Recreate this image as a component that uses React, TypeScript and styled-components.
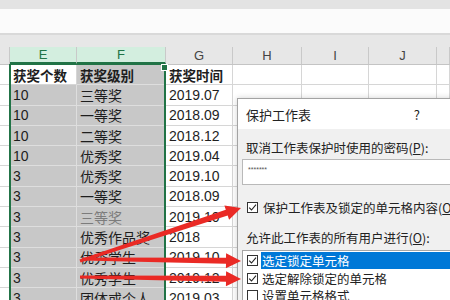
import React from "react"
import styled, { createGlobalStyle } from "styled-components"

const COLS = "10px 67px 89px 67px 69px 67px 68px 1fr"

const GlobalStyle = createGlobalStyle`
  html, body {
    margin: 0;
    padding: 0;
    width: 450px;
    height: 300px;
    overflow: hidden;
    background: #fff;
  }
  body {
    font-family: "Noto Sans CJK SC", "Liberation Sans", sans-serif;
  }
`

type Row = { count: string; level: string; time: string; muted?: boolean }

const rows: Row[] = [
  { count: "10", level: "三等奖", time: "2019.07" },
  { count: "10", level: "一等奖", time: "2018.09" },
  { count: "10", level: "二等奖", time: "2018.12" },
  { count: "10", level: "优秀奖", time: "2019.04" },
  { count: "3", level: "优秀奖", time: "2019.10" },
  { count: "3", level: "一等奖", time: "2018.09" },
  { count: "3", level: "三等奖", time: "2019.10", muted: true },
  { count: "3", level: "优秀作品奖", time: "2018" },
  { count: "3", level: "优秀学生", time: "2019.10" },
  { count: "3", level: "优秀学生", time: "2019.12" },
  { count: "3", level: "团体或个人", time: "2019.03" },
]

const headers = ["", "E", "F", "G", "H", "I", "J", ""]

// red annotation arrows drawn over the screenshot
const arrows = [
  { x1: 80, y1: 261, x2: 241, y2: 208 },
  { x1: 82, y1: 259, x2: 241, y2: 261 },
  { x1: 80, y1: 277, x2: 241, y2: 279 },
]

const arrowPoints = (x1: number, y1: number, x2: number, y2: number) => {
  const dx = x2 - x1
  const dy = y2 - y1
  const len = Math.hypot(dx, dy)
  const ux = dx / len
  const uy = dy / len
  const nx = -uy
  const ny = ux
  const head = 15
  const hw = 7.5
  const w0 = 1.6
  const w1 = 3
  const bx = x2 - ux * head
  const by = y2 - uy * head
  const pts = [
    [x1 + nx * w0, y1 + ny * w0],
    [bx + nx * w1, by + ny * w1],
    [bx + nx * hw, by + ny * hw],
    [x2, y2],
    [bx - nx * hw, by - ny * hw],
    [bx - nx * w1, by - ny * w1],
    [x1 - nx * w0, y1 - ny * w0],
  ]
  return pts.map(p => p.map(v => v.toFixed(1)).join(",")).join(" ")
}

const Check = ({ checked }: { checked: boolean }) => (
  <CheckBox>
    {checked && (
      <svg width="9" height="9" viewBox="0 0 9 9">
        <polyline points="1.2,4.6 3.5,7 8,1.6" fill="none" stroke="#222" strokeWidth="1.1" />
      </svg>
    )}
  </CheckBox>
)

const App = () => {
  return (
    <Page>
      <GlobalStyle />
      <TopBand />
      <FormulaBar />
      <RibbonGap />
      <HeaderRow>
        {headers.map((h, i) => (
          <ColHead key={i} $selected={h === "E" || h === "F"}>{h}</ColHead>
        ))}
      </HeaderRow>

      <DataRow>
        <Cell />
        <Cell $bold>获奖个数</Cell>
        <Cell $sel $bold>获奖级别</Cell>
        <Cell $bold>获奖时间</Cell>
        <Cell />
        <Cell />
        <Cell />
        <Cell />
      </DataRow>
      {rows.map((r, i) => (
        <DataRow key={i}>
          <Cell />
          <Cell $sel>{r.count}</Cell>
          <Cell $sel $muted={r.muted}>{r.level}</Cell>
          <Cell>{r.time}</Cell>
          <Cell />
          <Cell />
          <Cell />
          <Cell />
        </DataRow>
      ))}

      <SelectionFrame>
        <FillHandle />
      </SelectionFrame>

      <Dialog>
        <TitleBar>
          <span>保护工作表</span>
          <span>?</span>
        </TitleBar>
        <DialogBody>
          <FieldLabel $gap={10}>取消工作表保护时使用的密码(<u>P</u>):</FieldLabel>
          <PasswordBox>*******</PasswordBox>
          <ProtectRow>
            <Check checked />
            <span>保护工作表及锁定的单元格内容(<u>O</u>)</span>
          </ProtectRow>
          <FieldLabel $gap={13}>允许此工作表的所有用户进行(<u>O</u>):</FieldLabel>
          <PermList>
            <PermItem>
              <Check checked />
              <PermText $active>选定锁定单元格</PermText>
            </PermItem>
            <PermItem>
              <Check checked />
              <PermText>选定解除锁定的单元格</PermText>
            </PermItem>
            <PermItem>
              <Check checked={false} />
              <PermText>设置单元格格式</PermText>
            </PermItem>
          </PermList>
        </DialogBody>
      </Dialog>

      <ArrowLayer width="450" height="300" viewBox="0 0 450 300">
        {arrows.map((a, i) => (
          <polygon key={i} points={arrowPoints(a.x1, a.y1, a.x2, a.y2)} fill="#ea2a25" />
        ))}
      </ArrowLayer>
    </Page>
  )
}

export default App

const Page = styled.div`
  position: relative;
  width: 450px;
  height: 300px;
  overflow: hidden;
  background: #fff;
`

const TopBand = styled.div`
  height: 9px;
  background: #e3e3e3;
`

const FormulaBar = styled.div`
  height: 24px;
  background: #fbfbfb;
  border-bottom: 2px solid #d9d9d9;
`

const RibbonGap = styled.div`
  height: 12px;
  background: #e7e7e7;
`

const HeaderRow = styled.div`
  display: grid;
  grid-template-columns: ${COLS};
  height: 18px;
  background: #e7e7e7;
  border-bottom: 1px solid #c4c4c4;
  box-sizing: border-box;
`

const ColHead = styled.div<{ $selected?: boolean }>`
  box-sizing: border-box;
  display: flex;
  align-items: center;
  justify-content: center;
  border-right: 1px solid #c9c9c9;
  font-family: "Liberation Sans", sans-serif;
  font-size: 13px;
  color: ${p => (p.$selected ? "#217346" : "#444")};
  background: ${p => (p.$selected ? "#d3eedf" : "transparent")};
  border-bottom: ${p => (p.$selected ? "2px solid #217346" : "none")};
`

const DataRow = styled.div`
  display: grid;
  grid-template-columns: ${COLS};
  height: 20.3px;
`

const Cell = styled.div<{ $sel?: boolean; $bold?: boolean; $muted?: boolean }>`
  box-sizing: border-box;
  display: flex;
  align-items: center;
  padding-left: 3px;
  overflow: hidden;
  white-space: nowrap;
  border-right: 1px solid ${p => (p.$sel ? "#dedede" : "#d6d6d6")};
  border-bottom: 1px solid ${p => (p.$sel ? "#dedede" : "#d6d6d6")};
  background: ${p => (p.$sel ? "#c8c8c8" : "#fff")};
  font-family: "Liberation Sans", "Noto Sans CJK SC", sans-serif;
  font-size: ${p => (p.$bold ? "13.5px" : "14px")};
  font-weight: ${p => (p.$bold ? 700 : 400)};
  color: ${p => (p.$muted ? "#7c7c7c" : "#1e1e1e")};
`

const SelectionFrame = styled.div`
  position: absolute;
  left: 9px;
  top: 64px;
  width: 157px;
  height: 250px;
  box-sizing: border-box;
  border: 2px solid #217346;
  border-top-width: 1px;
  pointer-events: none;
`

const FillHandle = styled.div`
  position: absolute;
  right: -4px;
  top: -1px;
  width: 5px;
  height: 5px;
  background: #217346;
  border: 1px solid #fff;
`

const Dialog = styled.div`
  position: absolute;
  left: 237px;
  top: 98px;
  width: 230px;
  height: 215px;
  box-sizing: border-box;
  border: 1px solid #a3a3a3;
  box-shadow: 0 0 6px rgba(0, 0, 0, 0.18);
  background: #f0f0f0;
  font-size: 12.5px;
  color: #222;
`

const TitleBar = styled.div`
  height: 30px;
  display: flex;
  align-items: center;
  justify-content: space-between;
  padding: 0 46px 0 8px;
  background: #fff;
  font-size: 13px;
`

const DialogBody = styled.div`
  padding-left: 4px;
`

const FieldLabel = styled.div<{ $gap: number }>`
  margin: ${p => p.$gap}px 0 0 4px;
  line-height: 18px;
  white-space: nowrap;
`

const PasswordBox = styled.div`
  margin-top: 2px;
  height: 26px;
  box-sizing: border-box;
  border: 1px solid #b9b9b9;
  border-right: none;
  background: #fff;
  padding: 6px 0 0 5px;
  font-family: "Liberation Sans", sans-serif;
  font-size: 7px;
  line-height: 8px;
  color: #555;
`

const ProtectRow = styled.div`
  margin-top: 13px;
  height: 18px;
  display: flex;
  align-items: center;
  gap: 5px;
  padding-left: 5px;
  white-space: nowrap;
`

const CheckBox = styled.div`
  flex: none;
  width: 11px;
  height: 11px;
  box-sizing: border-box;
  border: 1px solid #333;
  background: #fff;
  display: flex;
  align-items: center;
  justify-content: center;
`

const PermList = styled.div`
  margin-top: 3px;
  padding-top: 1px;
  height: 80px;
  background: #fff;
  border-left: 1px solid #a6a6a6;
  border-top: 1px solid #a6a6a6;
`

const PermItem = styled.div`
  display: flex;
  align-items: center;
  gap: 3px;
  height: 17.5px;
  padding-left: 4px;
  white-space: nowrap;
`

const PermText = styled.span<{ $active?: boolean }>`
  flex: 1;
  padding-left: 1px;
  line-height: 17px;
  background: ${p => (p.$active ? "#0078d7" : "transparent")};
  color: ${p => (p.$active ? "#fff" : "#222")};
`

const ArrowLayer = styled.svg`
  position: absolute;
  left: 0;
  top: 0;
  pointer-events: none;
`
